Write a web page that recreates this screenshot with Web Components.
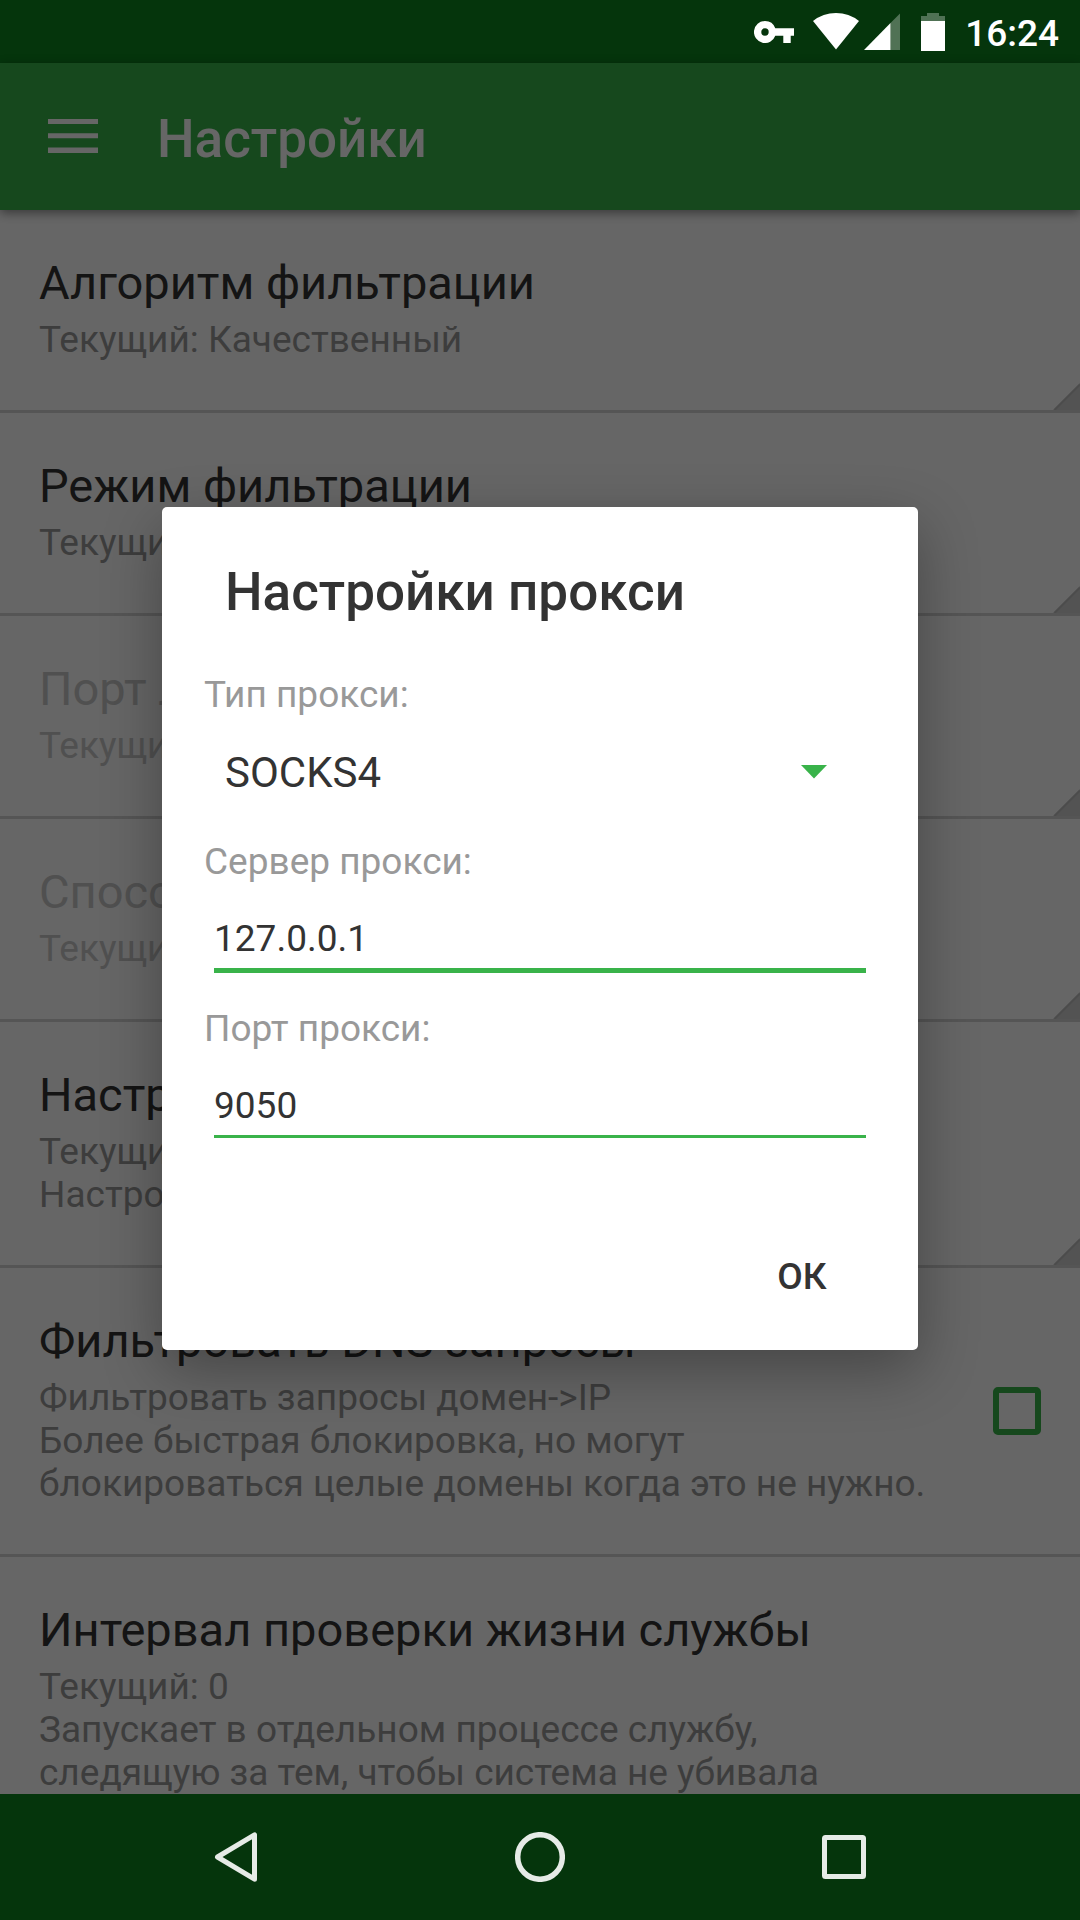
<!DOCTYPE html>
<html lang="ru">
<head>
<meta charset="utf-8">
<meta name="viewport" content="width=device-width, initial-scale=1">
<title>Настройки</title>
<style>
  :root {
    --accent: #39b34a;
    --system: #05350c;
    --text: #333;
    --muted: #999;
    --disabled: #c8c8c8;
    --divider: #d4d4d4;
  }
  body {
    margin: 0;
    height: 100vh;
    display: flex;
    flex-direction: column;
    overflow: hidden;
    background: #fff;
    color: var(--text);
    font-family: Roboto, "Noto Sans", sans-serif;
    font-size: 37px;
    line-height: 43px;
  }
</style>
</head>
<body>
<status-bar>16:24</status-bar>
<app-window>
  <app-bar>Настройки</app-bar>
  <preference-list>
    <preference-item more><span slot="title">Алгоритм фильтрации</span>Текущий: Качественный</preference-item>
    <preference-item more><span slot="title">Режим фильтрации</span>Текущий: 1</preference-item>
    <preference-item more disabled><span slot="title">Порт л.</span>Текущий: 0</preference-item>
    <preference-item more disabled><span slot="title">Способ</span>Текущий: 0</preference-item>
    <preference-item more><span slot="title">Настройки</span>Текущий: 0<br>Настройка</preference-item>
    <preference-item checkbox><span slot="title">Фильтровать DNS запросы</span>Фильтровать запросы домен-&gt;IP<br>Более быстрая блокировка, но могут блокироваться целые домены когда это не нужно.</preference-item>
    <preference-item><span slot="title">Интервал проверки жизни службы</span>Текущий: 0<br>Запускает в отдельном процессе службу, следящую за тем, чтобы система не убивала</preference-item>
  </preference-list>
  <proxy-dialog slot="overlay"></proxy-dialog>
</app-window>
<nav-bar></nav-bar>

<script>
  function define(name, html, setup) {
    const template = document.createElement('template');
    template.innerHTML = html;
    customElements.define(name, class extends HTMLElement {
      constructor() {
        super();
        this.attachShadow({ mode: 'open' }).append(template.content.cloneNode(true));
      }
      connectedCallback() {
        if (setup) setup(this, this.shadowRoot);
      }
    });
  }

  define('status-bar', `
    <style>
      :host {
        display: flex; flex: none; align-items: center; justify-content: flex-end;
        height: 63px; padding: 0 21px 0 0;
        background: var(--system); color: #fff; font-weight: 500;
      }
      svg { display: block; fill: #fff; }
      .key { margin-right: 19px; }
      .wifi { margin-right: 5px; }
      .signal { margin-right: 21px; }
      .battery { margin-right: 20px; }
      .faint { fill-opacity: .3; }
      time { padding-top: 4px; }
    </style>
    <svg class="key" width="40" height="22" viewBox="0 0 40 22" aria-hidden="true"><path fill-rule="evenodd" d="M11 0a11 11 0 0 1 10.300 7.300H40.300V14.700H36.700V22H29.300V14.700H21.300A11 11 0 1 1 11 0ZM11 7.300a3.700 3.700 0 1 0 0 7.400 3.700 3.700 0 1 0 0-7.400Z"/></svg>
    <svg class="wifi" width="46" height="37" viewBox="0 0 46 37" aria-hidden="true"><path d="M0 8Q10 0 23 0T46 8L23 36.500Z"/></svg>
    <svg class="signal" width="36" height="37" viewBox="0 0 36 37" aria-hidden="true"><path class="faint" d="M26.500 10 36.500 0V37H26.500Z"/><path d="M0 37 26.500 10V37Z"/></svg>
    <svg class="battery" width="24" height="38" viewBox="0 0 24 38" aria-hidden="true"><path class="faint" d="M6 0H18V3H24V8H0V3H6Z"/><path d="M0 8H24V38H0Z"/></svg>
    <time><slot></slot></time>
  `);

  define('app-window', `
    <style>
      :host { display: flex; flex-direction: column; flex: 1; min-height: 0; position: relative; }
    </style>
    <slot></slot><slot name="overlay"></slot>
  `);

  define('app-bar', `
    <style>
      :host { display: block; flex: none; position: relative; box-shadow: 0 3px 10px rgba(0, 0, 0, .45); }
      header { display: flex; align-items: center; gap: 51px; height: 147px; padding: 0 40px; background: var(--accent); color: #fff; }
      button { display: block; border: 0; margin: 0; padding: 8px 8px 10px; background: none; }
      svg { display: block; }
      h1 { margin: 0; padding-top: 4px; font-size: 53px; line-height: 62px; font-weight: 500; }
    </style>
    <header>
      <button type="button" aria-label="Меню"><svg width="50" height="34" viewBox="0 0 50 34" fill="#fff"><path d="M0 0H50V5H0ZM0 14.300H50V19.300H0ZM0 28.600H50V34H0Z"/></svg></button>
      <h1><slot></slot></h1>
    </header>
  `);

  define('preference-list', `
    <style>
      :host { display: block; flex: 1; min-height: 0; overflow: hidden; }
    </style>
    <slot></slot>
  `);

  define('preference-item', `
    <style>
      :host { display: block; position: relative; border-bottom: 3px solid var(--divider); }
      label { display: flex; gap: 62px; padding: 0 39px; }
      .text { flex: 1; min-width: 0; padding: 45px 0 49px; }
      .title { margin-bottom: 8px; font-size: 47px; line-height: 55px; }
      .summary { color: var(--muted); }
      .widget { flex: none; display: flex; align-items: center; width: 48px; }
      input { appearance: none; box-sizing: border-box; width: 48px; height: 48px; margin: 0; border: 6px solid var(--accent); border-radius: 5px; }
      .corner { display: none; position: absolute; right: 0; bottom: 0; }
      :host([disabled]) label, :host([disabled]) .summary { color: var(--disabled); }
      :host([more]) .corner { display: block; }
    </style>
    <label>
      <span class="text">
        <div class="title"><slot name="title"></slot></div>
        <div class="summary"><slot></slot></div>
      </span>
      <span class="widget"></span>
    </label>
    <svg class="corner" width="27" height="27" viewBox="0 0 27 27" aria-hidden="true"><path d="M0 27 27 0V27Z" fill="#cfcfcf"/><path d="M1.500 27 27 1.500" stroke="#bfbfbf" stroke-width="2"/></svg>
  `, (host, root) => {
    if (host.hasAttribute('checkbox') && !root.querySelector('input')) {
      const box = document.createElement('input');
      box.type = 'checkbox';
      root.querySelector('.widget').append(box);
    }
  });

  define('proxy-dialog', `
    <style>
      :host {
        position: absolute; inset: 0;
        display: flex; align-items: center; justify-content: center;
        background: rgba(0, 0, 0, .6);
      }
      form {
        box-sizing: border-box; width: 70%; padding: 54px 0 26px;
        background: #fff; border-radius: 5px; box-shadow: 0 20px 60px rgba(0, 0, 0, .32);
      }
      h2 { margin: 0 63px 50px; font-size: 53px; line-height: 62px; font-weight: 500; }
      .fields { display: flex; flex-direction: column; gap: 34px; padding: 0 42px; }
      label { display: block; margin-bottom: 32px; color: var(--muted); }
      .control { display: grid; align-items: start; height: 58px; }
      .control > * { grid-area: 1 / 1; }
      select, input {
        appearance: none; box-sizing: content-box; border: 0; border-radius: 0; outline: 0;
        background: none; color: var(--text); font: inherit; min-width: 0;
      }
      select { margin: 0; padding: 0 0 0 21px; height: 49px; font-size: 42px; line-height: 49px; }
      svg { justify-self: end; margin: 17px 49px 0 0; pointer-events: none; }
      input { height: 43px; margin: 0 10px; padding: 2px 0 8px; border-bottom: 3px solid var(--accent); }
      input.current { border-bottom-width: 5px; }
      footer { display: flex; justify-content: flex-end; margin-top: 89px; padding-right: 32px; }
      button { min-width: 168px; height: 95px; padding: 0; border: 0; background: none; color: var(--text); font: inherit; font-weight: 500; }
    </style>
    <form role="dialog" aria-labelledby="heading">
      <h2 id="heading">Настройки прокси</h2>
      <div class="fields">
        <div>
          <label for="type">Тип прокси:</label>
          <div class="control">
            <select id="type"><option>SOCKS4</option></select>
            <svg width="26" height="15" viewBox="0 0 26 15" aria-hidden="true"><path d="M0 0H26L13 13.500Z" fill="#39b34a"/></svg>
          </div>
        </div>
        <div>
          <label for="server">Сервер прокси:</label>
          <div class="control"><input id="server" class="current" type="text" value="127.0.0.1"></div>
        </div>
        <div>
          <label for="port">Порт прокси:</label>
          <div class="control"><input id="port" type="text" inputmode="numeric" value="9050"></div>
        </div>
      </div>
      <footer><button type="button">ОК</button></footer>
    </form>
  `);

  define('nav-bar', `
    <style>
      :host { display: block; flex: none; background: var(--system); }
      nav { display: flex; justify-content: center; height: 126px; }
      button { display: flex; align-items: center; justify-content: center; width: 304px; padding: 0; border: 0; background: none; }
      svg { fill: none; stroke: #e6ebe7; stroke-width: 5; stroke-linejoin: round; }
    </style>
    <nav>
      <button type="button" aria-label="Назад"><svg width="50" height="50" viewBox="0 0 50 50"><path d="M43.500 2.800V47.200L6.500 25Z"/></svg></button>
      <button type="button" aria-label="Домой"><svg width="50" height="50" viewBox="0 0 50 50"><circle cx="25" cy="25" r="22.300" stroke-width="5.500"/></svg></button>
      <button type="button" aria-label="Недавние"><svg width="50" height="50" viewBox="0 0 50 50"><rect x="5.500" y="5.500" width="39" height="39" rx="1"/></svg></button>
    </nav>
  `);
</script>
</body>
</html>
